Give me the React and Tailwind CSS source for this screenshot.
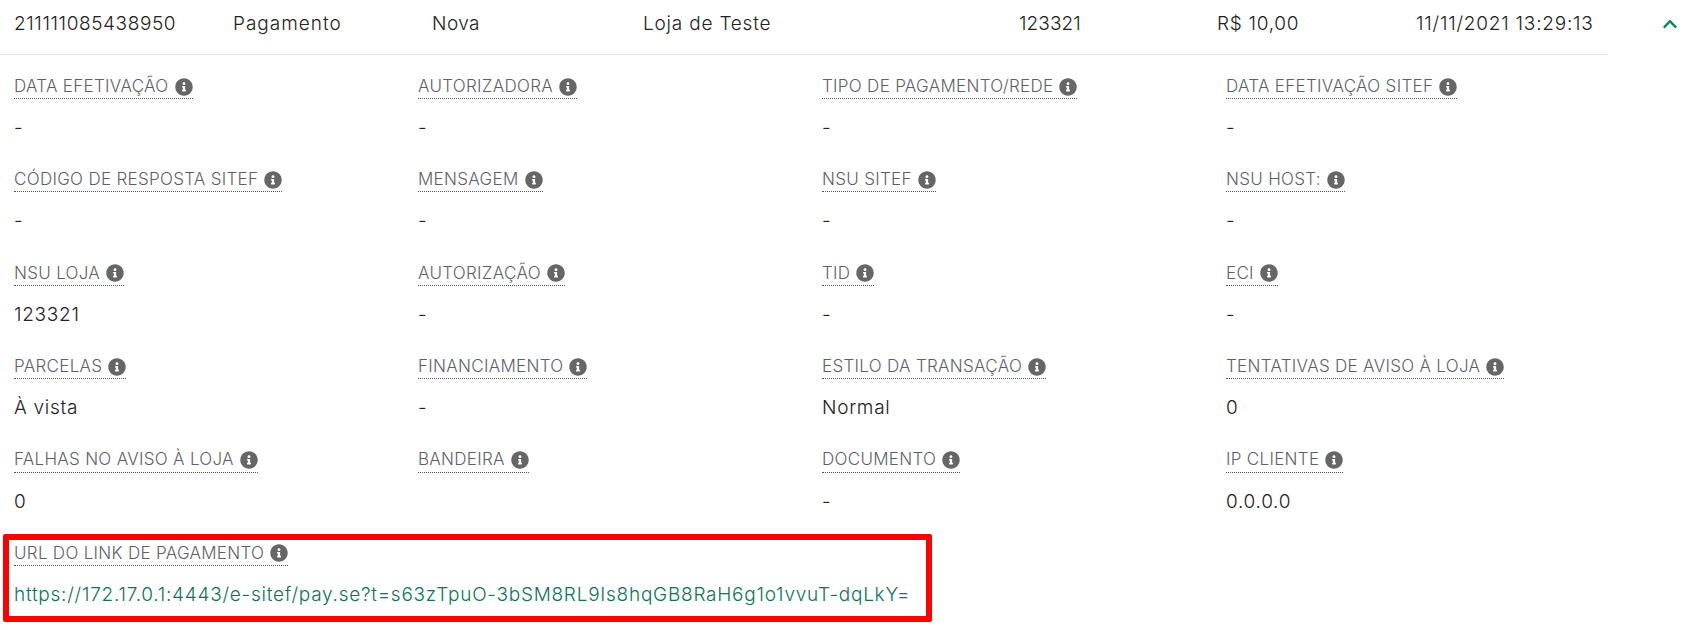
import React from 'react';
import { FaInfoCircle, FaChevronUp } from 'react-icons/fa';

const summary = [
  { text: '211111085438950', className: 'w-[219px] tracking-[0.6px]' },
  { text: 'Pagamento', className: 'w-[199px] tracking-[1px]' },
  { text: 'Nova', className: 'w-[211px] tracking-[0.45px]' },
  { text: 'Loja de Teste', className: 'w-[376px] tracking-[0.8px]' },
  { text: '123321', className: 'w-[198px] tracking-[0.1px]' },
  { text: 'R$ 10,00', className: 'w-[199px] tracking-[0.7px]' },
  { text: '11/11/2021 13:29:13', className: 'w-[247px] tracking-[0.78px]' },
];

const details = [
  ['DATA EFETIVAÇÃO', '-'],
  ['AUTORIZADORA', '-'],
  ['TIPO DE PAGAMENTO/REDE', '-'],
  ['DATA EFETIVAÇÃO SITEF', '-'],
  ['CÓDIGO DE RESPOSTA SITEF', '-'],
  ['MENSAGEM', '-'],
  ['NSU SITEF', '-'],
  ['NSU HOST:', '-'],
  ['NSU LOJA', '123321'],
  ['AUTORIZAÇÃO', '-'],
  ['TID', '-'],
  ['ECI', '-'],
  ['PARCELAS', 'À vista'],
  ['FINANCIAMENTO', '-'],
  ['ESTILO DA TRANSAÇÃO', 'Normal'],
  ['TENTATIVAS DE AVISO À LOJA', '0'],
  ['FALHAS NO AVISO À LOJA', '0'],
  ['BANDEIRA', ''],
  ['DOCUMENTO', '-'],
  ['IP CLIENTE', '0.0.0.0'],
];

const Label = ({ text }) => (
  <span className="inline-flex h-[24px] items-center gap-[6px] border-b border-dotted border-[#55555f] text-[17px] font-light tracking-[0.3px] text-[#5f5f6b]">
    {text}
    <FaInfoCircle className="h-[18px] w-[18px] text-[#666666]" />
  </span>
);

const Detail = ({ label, value, valueClass = 'text-[#222222] tracking-[0.72px]' }) => (
  <div className="flex h-[93.4px] flex-col items-start">
    <Label text={label} />
    <div className={`mt-[17px] h-[24px] whitespace-nowrap text-[19px] font-light leading-[24px] ${valueClass}`}>{value}</div>
  </div>
);

const App = () => {
  return (
    <div className="relative h-[630px] w-[1700px] overflow-hidden bg-white font-['Inter','Liberation_Sans',sans-serif]">
      <div className="flex h-[55px] w-[1607px] items-center border-b border-[#e0e0e6] pb-[5px] pl-[14px] text-[19px] font-light text-[#222222]">
        {summary.map((item) => (
          <div key={item.text} className={`shrink-0 whitespace-nowrap ${item.className}`}>{item.text}</div>
        ))}
        <FaChevronUp className="-mt-[2px] -ml-[1px] h-[16px] w-[16px] shrink-0 text-[#0a8a5f]" />
      </div>

      <div className="grid w-[1630px] grid-cols-4 pl-[14px] pt-[20px]">
        {details.map(([label, value]) => (
          <Detail key={label} label={label} value={value} />
        ))}
        <div className="col-span-4">
          <Detail
            label="URL DO LINK DE PAGAMENTO"
            value="https://172.17.0.1:4443/e-sitef/pay.se?t=s63zTpuO-3bSM8RL9Is8hqGB8RaH6g1o1vvuT-dqLkY="
            valueClass="text-[#0a7558] tracking-[0.75px]"
          />
        </div>
      </div>

      {/* marcação vermelha por cima do campo da URL */}
      <div className="absolute left-[3px] top-[534px] h-[88px] w-[929px] rounded-[2px] border-[6px] border-[#ff0000]" />
    </div>
  );
};

export default App;
